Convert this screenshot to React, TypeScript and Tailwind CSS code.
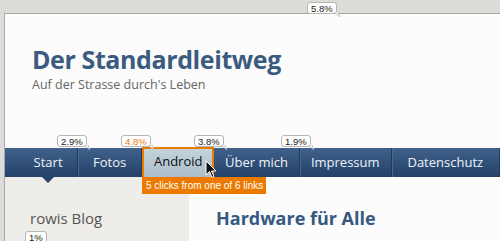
import React from "react"

const NAV = [
  { label: "Start", w: 74, pl: 14 },
  { label: "Fotos", w: 65 },
  { label: "Android", w: 73, active: true },
  { label: "Über mich", w: 87 },
  { label: "Impressum", w: 93 },
  { label: "Datenschutz", w: 110 },
]

function Badge({ text, x, y, orange }: { text: string; x: number; y: number; orange?: boolean }) {
  return (
    <div className="absolute z-20" style={{ left: x, top: y }}>
      <div
        className={`relative px-[3px] h-[12px] leading-[11px] text-[9.5px] bg-white border border-[#b5b5b5] rounded-[3px] ${
          orange ? "text-[#e87a10]" : "text-[#222]"
        }`}
        style={{ fontFamily: "'Liberation Sans', sans-serif" }}
      >
        {text}
      </div>
      <svg className="absolute" style={{ right: -4, top: 10 }} width="7" height="6" viewBox="0 0 7 6">
        <path d="M0 0 L6 5 L4 0 Z" fill="#fff" stroke="#b5b5b5" strokeWidth="0.8" />
      </svg>
    </div>
  )
}

export default function App() {
  return (
    <div
      className="relative w-[500px] h-[241px] overflow-hidden bg-[#dcdcd9] pt-[13px] pl-[4px]"
      style={{ fontFamily: "'Open Sans', sans-serif" }}
    >
      <div className="h-full bg-[#fbfcfb] border-t border-l border-[#a9a9a9] flex flex-col">
        {/* Header */}
        <div className="h-[134px] pl-[27px] pt-[28px]">
          <h1 className="text-[25px] font-bold text-[#3b5b80] leading-[34px] tracking-[-0.4px]">Der Standardleitweg</h1>
          <p className="text-[12.5px] text-[#666] leading-[16px] mt-[1px]">Auf der Strasse durch's Leben</p>
        </div>

        {/* Nav */}
        <div className="relative h-[29px] flex bg-gradient-to-b from-[#40618a] to-[#24426a]">
          {NAV.map((n) =>
            n.active ? (
              <div
                key={n.label}
                className="relative -mt-[1px] h-[32px] flex items-center justify-center border-2 border-[#ec7a00] bg-gradient-to-b from-[#c4d3dc] to-[#aabdc9] text-[#111] text-[13px] pb-[2px] z-10"
                style={{ width: n.w }}
              >
                {n.label}
              </div>
            ) : (
              <div
                key={n.label}
                className="h-full flex items-center justify-center text-[#eef2f6] text-[13px] border-r border-[#1e3a5e] shadow-[1px_0_0_#4b6a90]"
                style={{ width: n.w, paddingLeft: n.pl }}
              >
                {n.label}
              </div>
            )
          )}
          {/* pointer under Start */}
          <div className="absolute left-[37px] top-[29px] w-0 h-0 border-l-[6px] border-r-[6px] border-t-[6px] border-l-transparent border-r-transparent border-t-[#27456c]" />
        </div>

        {/* Body */}
        <div className="flex flex-1">
          <div className="w-[184px] bg-[#eeede9] pl-[25px] pt-[31px]">
            <div className="text-[15px] text-[#555] leading-[20px]">rowis Blog</div>
          </div>
          <div className="pl-[27px] pt-[29px]">
            <div className="text-[18px] font-bold text-[#37597f] leading-[24px]">Hardware für Alle</div>
          </div>
        </div>
      </div>

      {/* Orange tooltip */}
      <div
        className="absolute left-[142px] top-[177px] h-[17px] w-[124px] bg-[#ec7a00] text-white text-[10px] leading-[17px] pl-[4px] whitespace-nowrap overflow-hidden z-20"
        style={{ fontFamily: "'Liberation Sans', sans-serif" }}
      >
        5 clicks from one of 6 links
      </div>

      {/* Cursor */}
      <svg className="absolute left-[205px] top-[160px] z-30" width="12" height="19" viewBox="0 0 12 19">
        <path d="M1 1 L1 15 L4.5 11.5 L7 17.5 L9 16.5 L6.5 11 L11 11 Z" fill="#111" stroke="#fff" strokeWidth="1" />
      </svg>

      <Badge text="5.8%" x={307} y={2} />
      <Badge text="2.9%" x={57} y={135} />
      <Badge text="4.8%" x={121} y={135} orange />
      <Badge text="3.8%" x={194} y={135} />
      <Badge text="1.9%" x={281} y={135} />
      <Badge text="1%" x={25} y={231} />
    </div>
  )
}
